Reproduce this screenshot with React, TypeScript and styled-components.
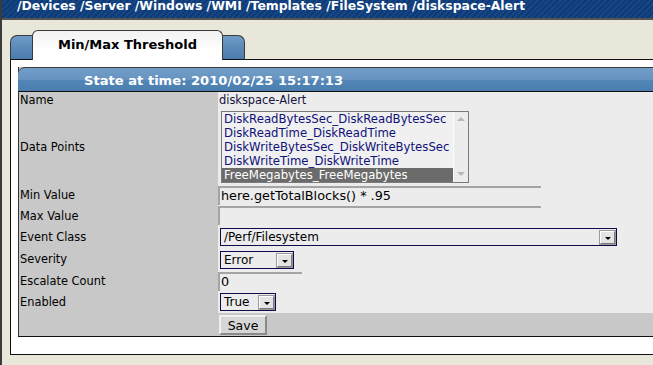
import React from "react";
import styled, { createGlobalStyle } from "styled-components";

const GlobalStyle = createGlobalStyle`
  html, body { margin: 0; padding: 0; }
  body {
    background: #e9e6da;
    font-family: "DejaVu Sans", Verdana, sans-serif;
    overflow: hidden;
  }
`;

const Page = styled.div`
  width: 653px;
  height: 365px;
  box-sizing: border-box;
  border-left: 2px solid #3b3b3b;
  overflow: hidden;
  background: #e9e6da;
`;

const Crumbs = styled.div`
  height: 18px;
  border-bottom: 2px solid #555;
  background: repeating-linear-gradient(
    135deg,
    #0f3a78 0px,
    #0f3a78 2px,
    #164684 2px,
    #164684 4px
  );
  color: #fff;
  font-weight: bold;
  font-size: 12.4px;
  line-height: 11px;
  padding-left: 15px;
  white-space: nowrap;
  overflow: hidden;
`;

const TabStrip = styled.div`
  display: flex;
  align-items: flex-end;
  padding: 10px 0 0 8px;
`;

const Cap = styled.div<{ $side: "left" | "right" }>`
  width: 22px;
  height: 25px;
  box-sizing: border-box;
  border: 1px solid #3a3a3a;
  ${(p) => (p.$side === "left" ? "border-right: none;" : "border-left: none;")}
  border-radius: ${(p) => (p.$side === "left" ? "7px 0 0 0" : "0 7px 0 0")};
  background: linear-gradient(#6f9cc6 0%, #5d8cba 45%, #4a7cab 100%);
  border-bottom-color: #111;
`;

const ActiveTab = styled.div`
  width: 191px;
  height: 30px;
  box-sizing: border-box;
  border: 1px solid #3a3a3a;
  border-bottom: none;
  border-radius: 6px 6px 0 0;
  background: linear-gradient(#f2f2f2 0%, #ffffff 70%);
  display: flex;
  align-items: center;
  justify-content: center;
  font-weight: bold;
  font-size: 13px;
  color: #000;
  padding-bottom: 2px;
`;

const TabFill = styled.div`
  flex: 1;
  height: 1px;
  background: #111;
`;

const Panel = styled.div`
  margin-left: 8px;
  background: #fff;
  border-left: 1px solid #111;
  border-bottom: 1px solid #111;
  padding: 7px 0 17px 7px;
`;

const Table = styled.div`
  border-left: 1px solid #333;
  border-bottom: 1px solid #111;
  background: #c8c8c8;
`;

const Header = styled.div`
  border-top: 1px solid #3a3a3a;
  border-bottom: 1px solid #111;
  border-radius: 7px 0 0 0;
  margin-left: -1px;
  box-sizing: border-box;
  height: 25px;
  background: linear-gradient(#729fc8 0%, #6693c0 50%, #5286b7 52%, #4a7eaf 100%);
  color: #fff;
  font-weight: bold;
  font-size: 13.1px;
  line-height: 25px;
  padding-left: 66px;
  white-space: nowrap;
`;

const Row = styled.div<{ $h: number }>`
  display: grid;
  grid-template-columns: 199px 1fr;
  height: ${(p) => p.$h}px;
`;

const Label = styled.div`
  display: flex;
  align-items: center;
  padding-left: 1px;
  font-size: 11.4px;
  color: #000;
  white-space: nowrap;
`;

const Value = styled.div<{ $top: number; $gray?: boolean }>`
  background: ${(p) => (p.$gray ? "#c8c8c8" : "#ececec")};
  padding-top: ${(p) => p.$top}px;
  box-sizing: border-box;
  font-size: 11.4px;
  color: #141440;
  white-space: nowrap;
  display: flex;
  align-items: flex-start;
`;

const PlainText = styled.div`
  line-height: 16px;
  padding-left: 1px;
`;

const ListBox = styled.div`
  margin-left: 3px;
  width: 248px;
  height: 72px;
  box-sizing: border-box;
  border: 1px solid #7a7a7a;
  background: #f0f0f0;
  display: flex;
`;

const ListItems = styled.div`
  flex: 1;
  padding-left: 0;
`;

const ListItem = styled.div<{ $selected?: boolean }>`
  height: 14px;
  line-height: 14px;
  padding-left: 2px;
  font-size: 11.7px;
  color: ${(p) => (p.$selected ? "#fff" : "#10107a")};
  background: ${(p) => (p.$selected ? "#6b6b6b" : "transparent")};
`;

const ScrollBar = styled.div`
  width: 15px;
  border-left: 1px solid #fafafa;
  background: #ececec;
  display: flex;
  flex-direction: column;
  justify-content: space-between;
  align-items: center;
  padding: 5px 0 6px;
  box-sizing: border-box;
`;

const Arrow = styled.div<{ $up?: boolean }>`
  width: 0;
  height: 0;
  border-left: 4px solid transparent;
  border-right: 4px solid transparent;
  ${(p) => (p.$up ? "border-bottom: 4px solid #b8b8b8;" : "border-top: 4px solid #b8b8b8;")}
`;

const TextInput = styled.div<{ $w: number }>`
  width: ${(p) => p.$w}px;
  height: 19px;
  box-sizing: border-box;
  border-top: 2px solid #a4a4a4;
  border-left: 2px solid #a4a4a4;
  color: #000;
  font-size: 12.8px;
  line-height: 16px;
  padding-left: 1px;
`;

const Select = styled.div<{ $w: number }>`
  margin-left: 2px;
  width: ${(p) => p.$w}px;
  height: 18px;
  box-sizing: border-box;
  border: 1px solid #0c0c4a;
  display: flex;
  align-items: center;
  justify-content: space-between;
  padding: 0 1px 0 3px;
  font-size: 12px;
  color: #000;
`;

const DropButton = styled.div`
  width: 15px;
  height: 13px;
  box-sizing: border-box;
  background: #e4e4e4;
  border: 1px solid #fff;
  border-right-color: #7a7a7a;
  border-bottom-color: #7a7a7a;
  box-shadow: 0 0 0 1px #9a9a9a;
  display: flex;
  align-items: center;
  justify-content: center;
  padding-top: 2px;
  &::after {
    content: "";
    border-left: 3px solid transparent;
    border-right: 3px solid transparent;
    border-top: 3px solid #000;
  }
`;

const SaveButton = styled.div`
  margin-left: 1px;
  width: 48px;
  height: 20px;
  box-sizing: border-box;
  background: #d6d6d6;
  border: 2px solid #f0f0f0;
  border-right-color: #8a8a8a;
  border-bottom-color: #8a8a8a;
  display: flex;
  align-items: center;
  justify-content: center;
  font-size: 12.5px;
  color: #000;
`;

const dataPoints = [
  "DiskReadBytesSec_DiskReadBytesSec",
  "DiskReadTime_DiskReadTime",
  "DiskWriteBytesSec_DiskWriteBytesSec",
  "DiskWriteTime_DiskWriteTime",
  "FreeMegabytes_FreeMegabytes",
];

export default function App() {
  return (
    <>
      <GlobalStyle />
      <Page>
        <Crumbs>/Devices /Server /Windows /WMI /Templates /FileSystem /diskspace-Alert</Crumbs>
        <TabStrip>
          <Cap $side="left" />
          <ActiveTab>Min/Max Threshold</ActiveTab>
          <Cap $side="right" />
          <TabFill />
        </TabStrip>
        <Panel>
          <Table>
            <Header>State at time: 2010/02/25 15:17:13</Header>
            <Row $h={16}>
              <Label>Name</Label>
              <Value $top={0}>
                <PlainText>diskspace-Alert</PlainText>
              </Value>
            </Row>
            <Row $h={77}>
              <Label>Data Points</Label>
              <Value $top={3}>
                <ListBox>
                  <ListItems>
                    {dataPoints.map((d, i) => (
                      <ListItem key={d} $selected={i === dataPoints.length - 1}>
                        {d}
                      </ListItem>
                    ))}
                  </ListItems>
                  <ScrollBar>
                    <Arrow $up />
                    <Arrow />
                  </ScrollBar>
                </ListBox>
              </Value>
            </Row>
            <Row $h={20}>
              <Label>Min Value</Label>
              <Value $top={1}>
                <TextInput $w={323}>here.getTotalBlocks() * .95</TextInput>
              </Value>
            </Row>
            <Row $h={21}>
              <Label>Max Value</Label>
              <Value $top={1}>
                <TextInput $w={323} />
              </Value>
            </Row>
            <Row $h={21}>
              <Label>Event Class</Label>
              <Value $top={2}>
                <Select $w={397}>
                  /Perf/Filesystem
                  <DropButton />
                </Select>
              </Value>
            </Row>
            <Row $h={23}>
              <Label>Severity</Label>
              <Value $top={4}>
                <Select $w={74}>
                  Error
                  <DropButton />
                </Select>
              </Value>
            </Row>
            <Row $h={21}>
              <Label>Escalate Count</Label>
              <Value $top={2}>
                <TextInput $w={84}>0</TextInput>
              </Value>
            </Row>
            <Row $h={22}>
              <Label>Enabled</Label>
              <Value $top={2}>
                <Select $w={56}>
                  True
                  <DropButton />
                </Select>
              </Value>
            </Row>
            <Row $h={23}>
              <Label />
              <Value $top={2} $gray>
                <SaveButton>Save</SaveButton>
              </Value>
            </Row>
          </Table>
        </Panel>
      </Page>
    </>
  );
}
